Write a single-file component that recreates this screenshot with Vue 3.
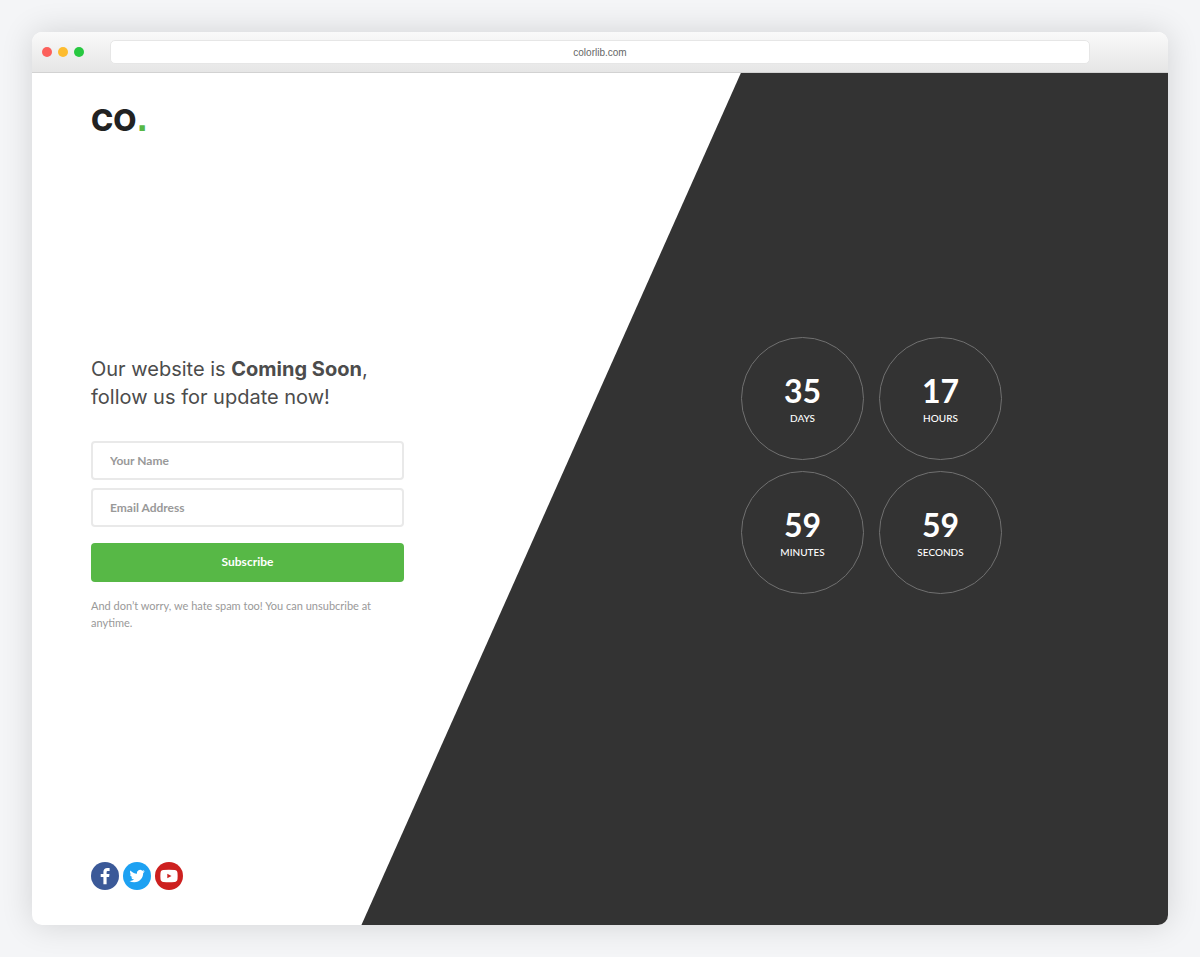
<script setup>
import { ref } from 'vue'

const name = ref('')
const email = ref('')

const countdown = [
  { value: '35', label: 'DAYS' },
  { value: '17', label: 'HOURS' },
  { value: '59', label: 'MINUTES' },
  { value: '59', label: 'SECONDS' },
]
</script>

<template>
  <div class="desktop">
    <div class="window">
      <header class="titlebar">
        <div class="lights">
          <span class="light red"></span>
          <span class="light yellow"></span>
          <span class="light green"></span>
        </div>
        <div class="address">colorlib.com</div>
      </header>

      <main class="page">
        <a class="logo" href="#" aria-label="CO.">CO<span class="dot">.</span></a>

        <section class="signup">
          <h1>Our website is <strong>Coming Soon</strong>,<br />follow us for update now!</h1>
          <form @submit.prevent>
            <input v-model="name" type="text" placeholder="Your Name" aria-label="Your Name" />
            <input v-model="email" type="email" placeholder="Email Address" aria-label="Email Address" />
            <button type="submit">Subscribe</button>
          </form>
          <p class="note">And don’t worry, we hate spam too! You can unsubcribe at anytime.</p>
        </section>

        <section class="countdown" aria-label="Countdown">
          <div v-for="item in countdown" :key="item.label" class="circle">
            <span class="value">{{ item.value }}</span>
            <span class="label">{{ item.label }}</span>
          </div>
        </section>

        <nav class="social" aria-label="Social links">
          <a class="facebook" href="#" aria-label="Facebook">
            <svg viewBox="0 0 28 28" width="28" height="28">
              <path d="M15.600 22.200v-7.200h2.500l.4-2.900h-2.900v-1.800c0-.9.3-1.400 1.500-1.400h1.500V6c-.4 0-1.300-.1-2.300-.1-2.300 0-3.900 1.400-3.900 3.900v2.300H9.700v2.900h2.700v7.200z" fill="#fff" />
            </svg>
          </a>
          <a class="twitter" href="#" aria-label="Twitter">
            <svg viewBox="0 0 28 28" width="28" height="28">
              <path transform="translate(6.400 6.400) scale(.64)" d="M23.950 4.570a10 10 0 0 1-2.825.775 4.958 4.958 0 0 0 2.163-2.723c-.951.555-2.005.959-3.127 1.184a4.920 4.920 0 0 0-8.384 4.482C7.690 8.095 4.067 6.130 1.640 3.162a4.822 4.822 0 0 0-.666 2.475c0 1.710.870 3.213 2.188 4.096a4.904 4.904 0 0 1-2.228-.616v.060a4.923 4.923 0 0 0 3.946 4.827 4.996 4.996 0 0 1-2.212.085 4.936 4.936 0 0 0 4.604 3.417 9.867 9.867 0 0 1-6.102 2.105c-.390 0-.779-.023-1.170-.067a13.995 13.995 0 0 0 7.557 2.209c9.053 0 13.998-7.496 13.998-13.985 0-.210 0-.420-.015-.630A9.935 9.935 0 0 0 24 4.590z" fill="#fff" />
            </svg>
          </a>
          <a class="youtube" href="#" aria-label="YouTube">
            <svg viewBox="0 0 28 28" width="28" height="28">
              <path d="M8.500 8.100Q14 7.600 19.500 8.100Q22.300 8.300 22.500 11Q22.800 14 22.500 17Q22.300 19.700 19.500 19.900Q14 20.400 8.500 19.900Q5.700 19.700 5.500 17Q5.200 14 5.500 11Q5.700 8.300 8.500 8.100Z" fill="#fff" />
              <path d="M12.300 11.700v4.600l4.200-2.300z" fill="#cd201f" />
            </svg>
          </a>
        </nav>
      </main>
    </div>
  </div>
</template>

<style>
body {
  margin: 0;
  background: #f4f5f7;
}
</style>

<style scoped>
* {
  box-sizing: border-box;
}

.desktop {
  display: flex;
  min-height: 100vh;
  padding: 32px;
  font-family: Lato, "Liberation Sans", sans-serif;
}

.window {
  display: flex;
  flex: 1;
  flex-direction: column;
  overflow: hidden;
  border-radius: 10px;
  background: #fff;
  box-shadow: 0 0 32px rgba(0, 0, 0, 0.14);
}

.titlebar {
  display: grid;
  grid-template-columns: 78px 1fr 78px;
  align-items: center;
  height: 41px;
  border-bottom: 1px solid #d2d2d2;
  background: linear-gradient(#fafafa, #e6e6e6);
}

.lights {
  display: flex;
  gap: 6px;
  padding-left: 10px;
}

.light {
  width: 10px;
  height: 10px;
  border-radius: 50%;
}

.red {
  background: #fc605b;
}

.yellow {
  background: #fdbc2f;
}

.green {
  background: #27c840;
}

.address {
  height: 24px;
  border: 1px solid #e6e6e6;
  border-radius: 5px;
  background: #fff;
  color: #666;
  font: 10px/23px "Liberation Sans", sans-serif;
  text-align: center;
}

.page {
  position: relative;
  isolation: isolate;
  display: grid;
  flex: 1;
  grid-template-columns: 313px auto;
  grid-template-rows: auto 1fr auto;
  justify-content: space-between;
  align-items: center;
  padding: 31px 166px 35px 59px;
}

.page::before {
  content: "";
  position: absolute;
  inset: 0;
  z-index: -1;
  background: #333;
  clip-path: polygon(62.4% 0, 100% 0, 100% 100%, 29% 100%);
}

.logo {
  grid-column: 1 / -1;
  justify-self: start;
  color: #222;
  font: 800 30px/32px Inter, sans-serif;
  text-decoration: none;
}

.dot {
  color: #57b846;
  font-family: "DejaVu Sans", sans-serif;
  font-weight: 700;
  line-height: 1;
}

.signup {
  margin-bottom: 13px;
}

h1 {
  margin: 0 0 30px;
  color: #4c4c4c;
  font: 400 20px/28px Inter, sans-serif;
  white-space: nowrap;
}

h1 strong {
  font-weight: 700;
}

form {
  display: flex;
  flex-direction: column;
  gap: 8px;
}

input {
  width: 100%;
  height: 39px;
  padding: 0 17px;
  border: 2px solid #e9e9e9;
  border-radius: 4px;
  background: #fff;
  color: #555;
  font: 700 12px/16px Lato, sans-serif;
}

input::placeholder {
  color: #999;
  opacity: 1;
}

button {
  height: 39px;
  margin-top: 8px;
  border: 0;
  border-radius: 4px;
  background: #57b846;
  color: #fff;
  font: 700 12px/16px Lato, sans-serif;
  cursor: pointer;
}

.note {
  margin: 15px 0 0;
  color: #999;
  font-size: 11px;
  line-height: 17px;
}

.countdown {
  display: grid;
  grid-template-columns: repeat(2, 123px);
  gap: 11px 15px;
  margin-bottom: 67px;
}

.circle {
  display: flex;
  flex-direction: column;
  align-items: center;
  justify-content: center;
  height: 123px;
  border: 1px solid #707070;
  border-radius: 50%;
  color: #fff;
}

.value {
  font-size: 32px;
  font-weight: 700;
  line-height: 38px;
}

.label {
  font-size: 10px;
  font-weight: 500;
  line-height: 16px;
}

.social {
  display: flex;
  grid-column: 1 / -1;
  gap: 4px;
}

.social a {
  display: flex;
  border-radius: 50%;
}

.facebook {
  background: #3b5998;
}

.twitter {
  background: #1da1f2;
}

.youtube {
  background: #cd201f;
}
</style>
